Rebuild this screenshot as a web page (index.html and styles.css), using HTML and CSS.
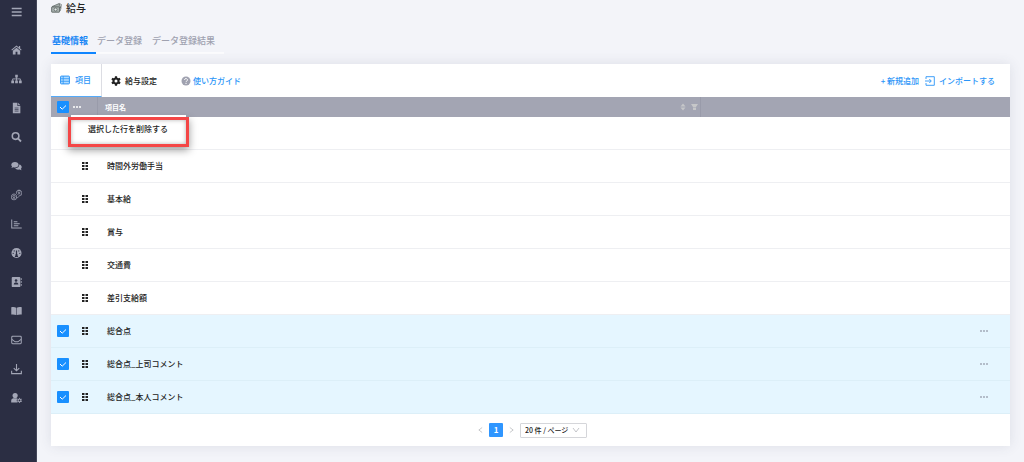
FILE: index.html
```html
<!DOCTYPE html>
<html lang="ja">
<head>
    <meta charset="utf-8">
    <title>給与</title>
    <link rel="stylesheet" href="styles.css">
</head>
<body>
<nav class="sidebar">
    <button class="menuButton" aria-label="メニュー"><svg viewBox="0 0 12 12"><path d="M.8 2.200h10.800M.8 6h10.800M.8 9.800h10.800" stroke="currentColor" stroke-width="1.500"/></svg></button>
    <a href="#" aria-label="ホーム"><svg viewBox="0 0 12 12"><path d="M6 1 .4 5.800l.7.8L6 2.500l4.900 4.100.7-.8L10 4.400V1.600H8.600v1.600zM6 3.500 2 6.900V11h3V8h2v3h3V6.900z" fill="currentColor"/></svg></a>
    <a href="#" aria-label="組織"><svg viewBox="0 0 12 12"><path d="M4.600 1.300h2.800v3H4.600zM.3 7.500h3v3h-3zM4.500 7.500h3v3h-3zM8.700 7.500h3v3h-3z" fill="currentColor"/><path d="M6 4v4M1.800 8V5.900h8.400V8" fill="none" stroke="currentColor"/></svg></a>
    <a href="#" aria-label="書類"><svg viewBox="0 0 12 12"><path d="M2 .4h5v3.300h3.200v7.900H2zM7.800.4l2.400 2.500H7.800z" fill="currentColor"/><path d="M4 6h4.200M4 7.700h4.200M4 9.400h4.200" stroke="#2b2e43" stroke-width=".7"/></svg></a>
    <a href="#" aria-label="検索"><svg viewBox="0 0 12 12"><circle cx="5" cy="5" r="3.600" fill="none" stroke="currentColor" stroke-width="1.700"/><path d="m7.600 7.600 3.300 3.300" stroke="currentColor" stroke-width="2"/></svg></a>
    <a href="#" aria-label="チャット"><svg viewBox="0 0 12 12"><path d="M4.300 1.700c2.300 0 4 1.300 4 3s-1.700 3-4 3c-.6 0-1.200-.1-1.700-.3L.4 8.200l.8-1.600C.6 6.100.3 5.400.3 4.700c0-1.700 1.700-3 4-3zM9 4.400c1.600.3 2.700 1.400 2.700 2.700 0 .8-.3 1.400-.9 1.900l.7 1.600-2.200-.8c-2 .5-4-.1-4.800-1.300C7 8.400 9.200 6.900 9 4.400z" fill="currentColor"/></svg></a>
    <a href="#" aria-label="連携"><svg viewBox="0 0 12 12" fill="none" stroke="currentColor" stroke-width=".8"><circle cx="8.800" cy="2.300" r="1.300"/><path d="M5.900 4.800V2.600C5.900.2 11.600-.2 11.600 3v2.400c0 1.200-2 1.500-3.300.6M7.200 5.500c.5-1.500 3-1.500 3.500 0"/><circle cx="3.200" cy="7.400" r="1.300"/><path d="M.5 9.700V7.200c0-3 5.500-3 5.500 0v2.500c0 2-5.500 2-5.500 0zM1.400 10.700c.4-2 3.200-2 3.700 0M6.200 8.800c1.300.3 2.400-.4 2.600-1.700"/></svg></a>
    <a href="#" aria-label="グラフ"><svg viewBox="0 0 12 12"><path d="M.8 1v9.400h10.900M3 3.500h4M3 5.700h6.500M3 7.900h5" fill="none" stroke="currentColor" stroke-width="1.100"/></svg></a>
    <a href="#" aria-label="ダッシュボード"><svg viewBox="0 0 12 12"><circle cx="6" cy="6" r="5.500" fill="currentColor"/><path d="M6 8.500V3.300M4.300 9.700h3.400" stroke="#2b2e43" stroke-width="1.300"/><g fill="#2b2e43"><circle cx="6" cy="8.300" r="1.300"/><circle cx="3.500" cy="3.700" r=".7"/><circle cx="8.500" cy="3.700" r=".7"/><circle cx="2.400" cy="6.400" r=".7"/><circle cx="9.600" cy="6.400" r=".7"/></g></svg></a>
    <a href="#" aria-label="アドレス帳"><svg viewBox="0 0 12 12"><rect x=".8" y=".5" width="9.400" height="11" rx="1" fill="currentColor"/><path d="M11.200 1.800v2M11.200 5v2M11.200 8.200v2" stroke="currentColor"/><circle cx="5.500" cy="4.400" r="1.400" fill="#2b2e43"/><path d="M3 8.600c0-2.800 5-2.800 5 0z" fill="#2b2e43"/></svg></a>
    <a href="#" aria-label="マニュアル"><svg viewBox="0 0 12 12"><path d="M.3 2c2-.5 4-.3 5.400.4v8c-1.600-.7-3.400-.8-5.400-.6zM11.700 2c-2-.5-4-.3-5.400.4v8c1.600-.7 3.400-.8 5.400-.6z" fill="currentColor"/></svg></a>
    <a href="#" aria-label="メール"><svg viewBox="0 0 12 12"><rect x=".8" y="2" width="10.400" height="8" rx="1" fill="none" stroke="currentColor" stroke-width="1.100"/><path d="M1 5.300 4.500 8h3L11 5.300" fill="none" stroke="currentColor" stroke-width="1.100"/></svg></a>
    <a href="#" aria-label="ダウンロード"><svg viewBox="0 0 12 12"><path d="M6 .5v7M3 5l3 3 3-3M.7 8v3h10.600V8" fill="none" stroke="currentColor" stroke-width="1.200"/></svg></a>
    <a href="#" aria-label="ユーザー設定"><svg viewBox="0 0 12 12"><circle cx="4.500" cy="3.300" r="2.800" fill="currentColor"/><path d="M.2 11V9c0-2.400 2-2.800 4.300-2.700 1 0 1.800.1 2.400.5C5.800 8.300 6.200 10 7.300 11z" fill="currentColor"/><circle cx="9.300" cy="8.600" r="1.600" fill="none" stroke="currentColor" stroke-width="1.100"/><path d="M9.300 5.900v1M9.300 10.300v1M6.900 7.200l1 .6M10.700 9.400l1 .6M6.900 10l1-.6M10.700 7.800l1-.6" stroke="currentColor"/></svg></a>
</nav>
<main class="content">
    <h1 class="pageTitle">
        <svg viewBox="0 0 12 12"><path d="m1 4.500 8-3.400 1.700 5.300" fill="#a5adab" stroke="#56615f" stroke-width=".8"/><path d="m9.200 1.200 2.200 1-1.200 7" fill="none" stroke="#56615f" stroke-width=".7"/><rect x=".7" y="4.800" width="8.600" height="5.800" rx=".6" fill="#a9b2b0" stroke="#46504e" stroke-width=".8"/><circle cx="5" cy="7.700" r="1.600" fill="#e6ebea" stroke="#46504e" stroke-width=".7"/></svg>
        給与
    </h1>
    <div class="tabs">
        <a href="#" class="tab active">基礎情報</a>
        <a href="#" class="tab">データ登録</a>
        <a href="#" class="tab">データ登録結果</a>
    </div>
    <section class="card">
        <div class="toolbar">
            <a href="#" class="subTab active"><svg viewBox="0 0 10 10"><rect x=".6" y="1.100" width="8.800" height="7.800" rx=".6" fill="#b3dcff" stroke="currentColor"/><path d="M3.200 1v8M.8 3.700h8.400M.8 6.300h8.400" stroke="currentColor" stroke-width=".8"/></svg>項目</a>
            <a href="#" class="subTab"><svg viewBox="0 0 10 10"><circle cx="5" cy="5" r="2.500" fill="none" stroke="currentColor" stroke-width="2"/><path d="M5 .3v2M5 7.700v2M.9 2.600l1.800 1.100M7.300 6.300l1.800 1.100M.9 7.400l1.800-1.100M7.300 3.700l1.800-1.100" stroke="currentColor" stroke-width="2.200"/></svg>給与設定</a>
            <a href="#" class="guide"><svg viewBox="0 0 10 10"><circle cx="5" cy="5" r="4.500" fill="#a0a2b0"/><path d="M3.500 4C3.500 2 6.600 2.200 6.500 4 6.500 5 5 5 5 6.100M5 6.900v1.100" fill="none" stroke="#fff"/></svg>使い方ガイド</a>
            <div class="actions">
                <button>+ 新規追加</button>
                <button><svg viewBox="0 0 10 10"><path d="M1 3V.7h8.300v8.600H1V7M0 5h6M4.300 3l2 2-2 2" fill="none" stroke="currentColor" stroke-width=".9"/></svg>インポートする</button>
            </div>
        </div>
        <table class="items">
            <colgroup>
                <col class="colCheck"><col class="colHandle"><col class="colName"><col><col class="colMore">
            </colgroup>
            <thead>
                <tr>
                    <th><input type="checkbox" aria-label="すべて選択" checked></th>
                    <th class="bulk">
                        <button aria-label="一括操作"><svg class="dots" viewBox="0 0 8 2"><path d="M0 1h2M3 1h2M6 1h2" stroke="currentColor" stroke-width="1.500"/></svg></button>
                        <div class="dropdown"><button>選択した行を削除する</button></div>
                    </th>
                    <th class="name">
                        <div class="nameHead">項目名
                            <svg viewBox="0 0 18 8"><path d="M3 .5 5.500 3.500h-5zM3 7.500l2.500-3h-5zM11 1h7L16 4h-3zM13 4.600h3v2.400h-3z" fill="#c6c7c9"/></svg>
                        </div>
                    </th>
                    <th></th>
                    <th></th>
                </tr>
            </thead>
            <tbody>
                <tr><td></td><td></td><td></td><td></td><td></td></tr>
                <tr><td></td><td><span class="handle"></span></td><td>時間外労働手当</td><td></td><td></td></tr>
                <tr><td></td><td><span class="handle"></span></td><td>基本給</td><td></td><td></td></tr>
                <tr><td></td><td><span class="handle"></span></td><td>賞与</td><td></td><td></td></tr>
                <tr><td></td><td><span class="handle"></span></td><td>交通費</td><td></td><td></td></tr>
                <tr><td></td><td><span class="handle"></span></td><td>差引支給額</td><td></td><td></td></tr>
                <tr class="selected">
                    <td><input type="checkbox" aria-label="総合点" checked></td><td><span class="handle"></span></td><td>総合点</td><td></td>
                    <td><button aria-label="操作"><svg class="dots" viewBox="0 0 8 2"><path d="M0 1h2M3 1h2M6 1h2" stroke="currentColor" stroke-width="1.500"/></svg></button></td>
                </tr>
                <tr class="selected">
                    <td><input type="checkbox" aria-label="総合点_上司コメント" checked></td><td><span class="handle"></span></td><td>総合点_上司コメント</td><td></td>
                    <td><button aria-label="操作"><svg class="dots" viewBox="0 0 8 2"><path d="M0 1h2M3 1h2M6 1h2" stroke="currentColor" stroke-width="1.500"/></svg></button></td>
                </tr>
                <tr class="selected">
                    <td><input type="checkbox" aria-label="総合点_本人コメント" checked></td><td><span class="handle"></span></td><td>総合点_本人コメント</td><td></td>
                    <td><button aria-label="操作"><svg class="dots" viewBox="0 0 8 2"><path d="M0 1h2M3 1h2M6 1h2" stroke="currentColor" stroke-width="1.500"/></svg></button></td>
                </tr>
            </tbody>
        </table>
        <div class="pager">
            <button aria-label="前へ"><svg viewBox="0 0 6 8"><path d="M5 1 1 4l4 3" fill="none" stroke="currentColor" stroke-width=".9"/></svg></button>
            <button class="current">1</button>
            <button aria-label="次へ"><svg viewBox="0 0 6 8"><path d="m1 1 4 3-4 3" fill="none" stroke="currentColor" stroke-width=".9"/></svg></button>
            <div class="pageSize">
                <select aria-label="表示件数"><option>20 件 / ページ</option></select>
                <svg viewBox="0 0 8 6"><path d="m1 1 3 4 3-4" fill="none" stroke="currentColor" stroke-width=".8"/></svg>
            </div>
        </div>
    </section>
</main>
</body>
</html>
```
FILE: styles.css
```css
* {
    box-sizing: border-box;
}
body {
    margin: 0;
    display: flex;
    min-height: 100vh;
    background-color: #f3f4f9;
    color: #222;
    font-family: "Noto Sans CJK JP", sans-serif;
    font-size: 8px;
    font-weight: 500;
    line-height: 12px;
}
a {
    color: inherit;
    text-decoration: none;
}
button {
    display: flex;
    align-items: center;
    padding: 0;
    border: 0;
    background: none;
    color: inherit;
    font: inherit;
}
svg {
    display: block;
    flex: none;
}

/* sidebar */
.sidebar {
    flex: none;
    width: 37px;
    padding: 6px 0 0 11px;
    background-color: #2b2e43;
    border-right: 1px solid #44475a;
    color: #a3a6b6;
}
.sidebar svg {
    width: 11px;
    height: 12px;
}
.sidebar a {
    display: block;
    margin-bottom: 17px;
}
.menuButton {
    margin-bottom: 26px;
}

.content {
    flex: 1;
    min-width: 0;
    padding: 2px 14px 16px;
}
.pageTitle {
    display: flex;
    align-items: center;
    gap: 4px;
    margin: 0 0 21px;
    font-size: 10px;
    font-weight: 500;
    line-height: 12px;
}
.pageTitle svg {
    width: 11px;
    height: 12px;
}
.tabs {
    display: flex;
    width: 173px;
    color: #a0a2b0;
    font-size: 9px;
    border-bottom: 2px solid #fbfbfd;
}
.tab {
    padding: 0 9px 5px 1px;
    height: 17px;
    white-space: nowrap;
}
.tab.active {
    height: 19px;
    margin-bottom: -2px;
    padding-right: 8px;
    color: #1a87f5;
    font-weight: 700;
    border-bottom: 2px solid #0f85ff;
}

/* card */
.card {
    margin-top: 10px;
    background-color: white;
    box-shadow: 0 0 12px rgba(60, 64, 90, 0.12);
}
.toolbar {
    display: flex;
    height: 33px;
    padding-right: 15px;
}
.toolbar svg {
    width: 10px;
    height: 10px;
}
.subTab, .guide, .actions, .actions button {
    display: flex;
    align-items: center;
}
.subTab {
    gap: 4px;
    padding: 0 10px 0 9px;
}
.subTab.active {
    gap: 5px;
    color: #2b95f8;
    border-right: 1px solid #dcdde3;
    border-bottom: 1px solid #54aaf9;
}
.guide {
    gap: 2px;
    margin-left: 14px;
    color: #2b95f8;
}
.actions {
    gap: 6px;
    margin-left: auto;
    color: #2b95f8;
}
.actions button {
    gap: 4px;
}

/* table */
.items {
    width: 100%;
    table-layout: fixed;
    border-collapse: separate;
    border-spacing: 0;
}
.colCheck {
    width: 22px;
}
.colHandle {
    width: 24px;
}
.colName {
    width: 63%;
}
.colMore {
    width: 30px;
}
th, td {
    padding: 0;
    text-align: left;
}
th {
    height: 20px;
    background-color: #a3a5b3;
    color: white;
    font-size: 7px;
    font-weight: 700;
}
td {
    height: 33px;
    border-bottom: 1px solid #eeeff2;
}
td:nth-child(2) {
    padding-left: 9px;
}
td:nth-child(3) {
    padding-left: 10px;
}
th.name {
    border-left: 1px solid #999baa;
    border-right: 1px solid #999baa;
    padding: 0 2px 0 7px;
}
.nameHead {
    display: flex;
    align-items: center;
    justify-content: space-between;
}
.nameHead svg {
    width: 18px;
    height: 8px;
}
.selected td {
    background-color: #e5f6ff;
    border-bottom-color: #dceff8;
}
.selected button {
    color: #a2abb9;
}
.dots {
    width: 8px;
    height: 2px;
}
input[type=checkbox] {
    appearance: none;
    display: block;
    width: 12px;
    height: 12px;
    margin: 0 0 0 6px;
    border-radius: 1px;
    background: #1990ff url("data:image/svg+xml,%3Csvg xmlns='http://www.w3.org/2000/svg' viewBox='0 0 12 12'%3E%3Cpath d='m3 6 2.200 2.200L9 4.500' fill='none' stroke='white'/%3E%3C/svg%3E");
}
.handle {
    display: block;
    width: 6px;
    height: 8px;
    background: url("data:image/svg+xml,%3Csvg xmlns='http://www.w3.org/2000/svg' viewBox='0 0 6 8'%3E%3Cpath d='M0 0h2.500v2H0zM3.500 0H6v2H3.500zM0 3h2.500v2H0zM3.500 3H6v2H3.500zM0 6h2.500v2H0zM3.500 6H6v2H3.500z' fill='%23222'/%3E%3C/svg%3E");
}
.bulk {
    position: relative;
}
/* opens over the first row */
.dropdown {
    position: absolute;
    z-index: 1;
    top: 20px;
    left: -5px;
    padding: 3px 15px 9px 17px;
    background-color: white;
    border: 3px solid #f44646;
    box-shadow: 0 3px 8px rgba(0, 0, 0, 0.4), inset 0 0 4px rgba(0, 0, 0, 0.3);
    color: #222;
    font-size: 8px;
    font-weight: 500;
    white-space: nowrap;
}
.dropdown button {
    padding-right: 3px;
}
.dropdown::before {
    content: "";
    position: absolute;
    top: -5px;
    left: 0;
    right: 0;
    height: 2px;
    background-color: white;
}

/* pager */
.pager {
    display: flex;
    align-items: center;
    justify-content: center;
    gap: 6px;
    height: 32px;
    padding-left: 4px;
    color: #b5b6bb;
}
.pager svg {
    width: 5px;
    height: 8px;
}
.pager .current {
    justify-content: center;
    width: 14px;
    height: 14px;
    border-radius: 1px;
    background-color: #2f96ff;
    color: white;
    font-weight: 700;
}
.pageSize {
    display: grid;
    align-items: center;
    width: 67px;
    height: 15px;
    border: 1px solid #d5d6da;
    border-radius: 1px;
}
.pageSize select, .pageSize svg {
    grid-area: 1 / 1;
}
.pageSize select {
    appearance: none;
    height: 13px;
    padding: 0 0 0 4px;
    border: 0;
    background: none;
    color: #222;
    font: inherit;
    font-size: 7px;
}
.pager .pageSize svg {
    justify-self: end;
    width: 8px;
    height: 6px;
    margin-right: 6px;
    pointer-events: none;
}
```
